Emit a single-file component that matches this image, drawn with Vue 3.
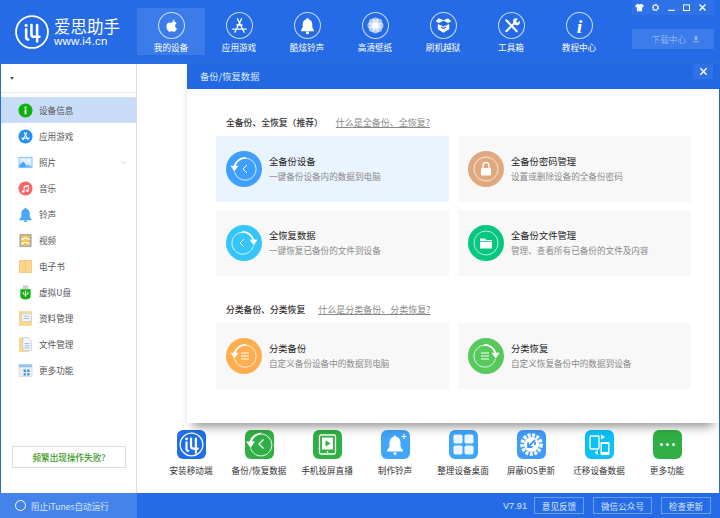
<script setup>
// 顶部导航
const navItems = [
  { label: '我的设备', active: true, icon: '<path fill="#fff" d="M15.800 7.200c-1 .2-2 1.300-1.900 2.700 1.200 0 2.100-1.300 1.900-2.700zM13.300 10.500c-.8 0-1.300-.5-2.200-.5-1.500 0-3 1.300-3 3.800 0 2.600 1.800 5.300 3.200 5.300.8 0 1.200-.5 2.100-.5s1.200.5 2.100.5c1.200 0 2.400-2 2.800-3.100-1.200-.5-1.800-1.500-1.800-2.700 0-1.100.6-2 1.400-2.500-.7-.9-1.600-1.300-2.600-1.300-1 0-1.400.5-2 .5z"/>' },
  { label: '应用游戏', icon: '<path fill="none" stroke="#fff" stroke-width="1.300" stroke-linecap="round" d="M15 6.500 8.500 19.500M11 6.500l6.500 13M6.500 16.500h13M10.500 12.500h5"/>' },
  { label: '酷炫铃声', icon: '<path fill="#fff" d="M13 5.800c-.7 0-1.100.5-1.100 1.100-2.200.5-3.500 2.400-3.500 4.800v3L6.800 17.500v1h12.400v-1l-1.600-2.800v-3c0-2.400-1.300-4.300-3.500-4.800 0-.6-.4-1.100-1.100-1.100z"/><circle cx="13" cy="20" r="1.500" fill="#fff"/>' },
  { label: '高清壁纸', icon: '<g fill="#fff" fill-opacity=".6"><circle cx="13" cy="8.500" r="3.200"/><circle cx="13" cy="17.500" r="3.200"/><circle cx="8.500" cy="13" r="3.200"/><circle cx="17.500" cy="13" r="3.200"/><circle cx="9.800" cy="9.800" r="3.200"/><circle cx="16.200" cy="9.800" r="3.200"/><circle cx="9.800" cy="16.200" r="3.200"/><circle cx="16.200" cy="16.200" r="3.200"/></g><circle cx="13" cy="13" r="3" fill="#fff"/>' },
  { label: '刷机越狱', icon: '<path fill="#fff" d="M8.500 6 13 8l4.500-2 3 3-3 1.500L13 8.500 8.500 10.500l-3-1.500zM7.500 11.500 13 14l5.500-2.500v5L13 20l-5.500-3.500z"/><path fill="none" stroke="#2f72e7" stroke-width="1.200" d="M10.500 14.500 13 16l2.500-1.500"/>' },
  { label: '工具箱', icon: '<path fill="none" stroke="#fff" stroke-width="2" stroke-linecap="round" d="M8 8l10 10.500M17 9.500 8 18.500"/><path fill="#fff" d="M15.500 6.500c1.200-.8 2.800-.7 3.800.2l-2.200 2 .5 1.200 1.300.4 1.800-1.900c.7 1.200.5 2.700-.5 3.600-1 1-2.500 1.100-3.600.4l-2-2c-.3-1.300 0-3 .9-3.900z"/>' },
  { label: '教程中心', icon: '<text x="13" y="20" text-anchor="middle" font-family="Liberation Serif, serif" font-style="italic" font-weight="700" font-size="19" fill="#fff">i</text>' },
]

// 侧边栏
const sideItems = [
  { label: '设备信息', active: true, icon: '<circle cx="8" cy="8" r="7.500" fill="#0db20d"/><rect x="7" y="6.800" width="2" height="5.200" fill="#fff"/><rect x="7" y="3.800" width="2" height="2" fill="#fff"/>' },
  { label: '应用游戏', icon: '<circle cx="8" cy="8" r="7.500" fill="#2290f2"/><path fill="none" stroke="#fff" stroke-width="1.200" d="M9.500 3.500 5 12M6.500 3.500 11 12M3.500 9.800h9"/>' },
  { label: '照片', arrow: true, icon: '<rect x=".5" y="2" width="15" height="12" fill="#7cc3fb"/><rect x="1.500" y="3" width="13" height="10" fill="#d8eefe"/><circle cx="11.500" cy="5.500" r="1.300" fill="#fff"/><path fill="#45a6f6" d="M1.500 13v-2.500L6 7l4 6z"/><path fill="#79c0fa" d="M7 13l3.500-3 4 2v1z"/>' },
  { label: '音乐', icon: '<circle cx="8" cy="8" r="7.500" fill="#fa6464"/><path fill="#fff" d="M6 5.200 11.500 4v6.300a1.500 1.300 0 1 1-1-1.200V6L7 6.800v4.500a1.500 1.300 0 1 1-1-1.200z"/>' },
  { label: '铃声', icon: '<path fill="#4aa8f8" d="M8 .8c-.7 0-1 .5-1 1-2.300.6-3.500 2.700-3.500 5v3.700L1.500 13v1h13v-1l-2-2.500V6.800c0-2.300-1.200-4.400-3.500-5 0-.5-.3-1-1-1z"/><ellipse cx="8" cy="15" rx="2" ry="1" fill="#4aa8f8"/>' },
  { label: '视频', icon: '<rect x="1.500" y="1" width="13" height="14" fill="#aaa"/><rect x="3.500" y="2.500" width="9" height="11" fill="#f5c452"/><path fill="#fff" d="M3.500 6 8 4.500 12.500 6.500v1L8 6 3.500 8zM3.500 11l4.500-2 4.500 2v1L8 10.500 3.500 12.500z"/>' },
  { label: '电子书', icon: '<rect x="1.500" y="1.500" width="6.300" height="13" fill="#fbd68a" stroke="#f3b56b" stroke-width=".6"/><rect x="8.200" y="1.500" width="6.300" height="13" fill="#fbd68a" stroke="#f3b56b" stroke-width=".6"/>' },
  { label: '虚拟U盘', icon: '<rect x="5" y=".5" width="6" height="4" fill="#ccc"/><path fill="#12b212" d="M2.500 4.500h11v7.500c0 2-1.800 3.500-5.500 3.500S2.500 14 2.500 12z"/><path fill="none" stroke="#fff" stroke-width="1" d="M8 6v6.500M5.500 7.500V9.500L8 11l2.500-1.500V7.500"/>' },
  { label: '资料管理', icon: '<rect x="1.500" y=".8" width="13" height="14.500" fill="#fbd98f" stroke="#eec36e" stroke-width=".5"/><rect x="4" y="3" width="10" height="8" fill="#f4f6fb" stroke="#b9c6de" stroke-width=".6"/><path stroke="#8ea6cf" stroke-width=".8" d="M6 5.500h6M6 8h6"/>' },
  { label: '文件管理', icon: '<rect x="1.500" y="1" width="10" height="14.500" fill="#fbd98f" stroke="#eec36e" stroke-width=".5"/><path fill="#f4f6fb" stroke="#a9b8d4" stroke-width=".6" d="M5 .8h6l3.500 3.500v10H5z"/><path stroke="#8ea6cf" stroke-width=".8" d="M7 7h5.500M7 9.300h5.500M7 11.600h5.500"/>' },
  { label: '更多功能', icon: '<rect x="1" y="1.500" width="14" height="13" fill="#e9edf3" stroke="#c4cbd6" stroke-width=".5"/><rect x="1" y="1.500" width="14" height="3" fill="#8cc4f2"/><path fill="#3f8fdd" d="M6 7h2.500v2.500H6zM9.800 7h2.500v2.500H9.800zM6 10.800h2.500v2.500H6zM9.800 10.800h2.500v2.500H9.800z"/>' },
]

// 卡片图标：同一套环形箭头，恢复类方向相反
const ringLeft = '<path fill="none" stroke="#fff" stroke-width=".8" d="M8.500 21a11 11 0 1 0 11-13.800"/><path fill="none" stroke="#fff" stroke-width="1.800" d="M20 6.800A11.500 11.500 0 0 0 8.500 15"/><path fill="#fff" d="M4.500 14.800h8L8.300 20.500z"/>'
const ringRight = '<path fill="none" stroke="#fff" stroke-width=".8" d="M27.500 21a11 11 0 1 1-11-13.800"/><path fill="none" stroke="#fff" stroke-width="1.800" d="M16 6.800A11.500 11.500 0 0 1 27.500 15"/><path fill="#fff" d="M31.500 14.800h-8l4.200 5.700z"/>'
const ring = '<circle cx="18" cy="18" r="12" fill="none" stroke="#fff" stroke-opacity=".8" stroke-width=".9"/>'
const chevron = x => `<path fill="none" stroke="#fff" stroke-width="1" d="M${x + 3} 14l-4 4 4 4"/>`
const lines = x => `<path stroke="#fff" stroke-width="1.200" d="M${x} 15h8M${x} 18h8M${x} 21h8"/>`

// i4 标志，笔画画出，顶栏和底部工具共用
const i4Mark = '<path fill="none" stroke="#fff" stroke-width="2.400" stroke-linecap="round" stroke-linejoin="round" d="M10.500 13.500v7.500q0 2 2 2M15.500 9.500V18q0 2.500 2.500 2.500h5M20.800 9.500v15.500"/><circle cx="10.500" cy="9.800" r="1.500" fill="#fff"/>'

const fullCards = [
  { title: '全备份设备', desc: '一键备份设备内的数据到电脑', color: '#3f9fff', hot: true, icon: ringLeft + chevron(18) },
  { title: '全备份密码管理', desc: '设置或删除设备的全备份密码', color: '#e0a87e', icon: ring + '<path fill="none" stroke="#fff" stroke-width="1.300" d="M15 17v-2.500a3 3 0 0 1 6 0V17"/><rect x="13" y="17" width="10" height="7.500" rx=".8" fill="#fff"/>' },
  { title: '全恢复数据', desc: '一键恢复已备份的文件到设备', color: '#34c6fb', icon: ringRight + chevron(15) },
  { title: '全备份文件管理', desc: '管理、查看所有已备份的文件及内容', color: '#06c77f', icon: ring + '<path fill="#fff" d="M12 13.500h5l1.500 1.500H24v8.500H12z"/><path fill="#06c77f" d="M12 16.200h12v.7H12z"/>' },
]
const partCards = [
  { title: '分类备份', desc: '自定义备份设备中的数据到电脑', color: '#ffae4f', icon: ringLeft + lines(15) },
  { title: '分类恢复', desc: '自定义恢复备份中的数据到设备', color: '#58c95c', icon: ringRight + lines(13) },
]

// 底部工具
const tools = [
  { label: '安装移动端', color: '#1f6ee8', icon: '<circle cx="16" cy="16" r="12.500" fill="none" stroke="#fff" stroke-width="1.400"/>' + i4Mark, box: '0 0 32 32' },
  { label: '备份/恢复数据', color: '#30b044', icon: '<g transform="translate(-3.500 -3.500)"><path fill="none" stroke="#fff" stroke-width=".9" d="M9 22a11 11 0 1 0 11-14.500"/><path fill="none" stroke="#fff" stroke-width="2.200" d="M20 7A11.500 11.500 0 0 0 9 15.500"/><path fill="#fff" d="M4.500 15h9L9 21.500z"/><path fill="none" stroke="#fff" stroke-width="1.200" d="M22 13l-4.500 4.500 4.500 4.500"/></g>' },
  { label: '手机投屏直播', color: '#30b044', icon: '<rect x="6.500" y="5" width="16" height="19" rx="1.500" fill="none" stroke="#fff" stroke-width="1.300"/><rect x="9" y="7.500" width="11" height="12" fill="#fff"/><path fill="#30b044" d="M12.500 10.500l5 3-5 3z"/><circle cx="14.500" cy="21.800" r=".9" fill="#fff"/>' },
  { label: '制作铃声', color: '#3fa6fa', icon: '<path fill="#fff" d="M14 5.500c-.8 0-1.300.6-1.300 1.300-2.800.6-4.200 3-4.200 6v3.700L6 20.500v1h16v-1l-2.500-3.800v-3.900c0-3-1.400-5.400-4.200-6 0-.7-.5-1.300-1.300-1.300z"/><circle cx="14" cy="23.500" r="1.500" fill="#fff"/><path stroke="#fff" stroke-width="1.200" d="M23 4v5M20.500 6.500h5"/>' },
  { label: '整理设备桌面', color: '#3fa6fa', icon: '<g fill="#fff" fill-opacity=".9"><rect x="4.500" y="4.500" width="9" height="9" rx="1.800"/><rect x="15.500" y="4.500" width="9" height="9" rx="1.800"/><rect x="4.500" y="15.500" width="9" height="9" rx="1.800"/><rect x="15.500" y="15.500" width="9" height="9" rx="1.800"/></g>' },
  { label: '屏蔽iOS更新', color: '#3f9bf8', icon: '<circle cx="14.500" cy="14.500" r="9.500" fill="none" stroke="#fff" stroke-width="3.500" stroke-dasharray="3 1.500"/><circle cx="14.500" cy="14.500" r="7.500" fill="#fff"/><path fill="none" stroke="#3f9bf8" stroke-width="1.800" d="M18 10l-6.500 6.500M11 12.500v4.500h4.500M18 12v3"/>' },
  { label: '迁移设备数据', color: '#0cc0f8', icon: '<rect x="5" y="6" width="9" height="13" rx="1" fill="none" stroke="#fff" stroke-width="1.300"/><rect x="15.500" y="12" width="9" height="13" rx="1" fill="#fff"/><rect x="17" y="14" width="6" height="8" fill="#0cc0f8"/><path fill="#fff" d="M16 4.500l4 2.500-4 2.500zM13 20l-3.500 2.500L13 25z"/>' },
  { label: '更多功能', color: '#30b044', icon: '<g fill="#fff"><circle cx="8.500" cy="14.500" r="1.500"/><circle cx="14.500" cy="14.500" r="1.500"/><circle cx="20.500" cy="14.500" r="1.500"/></g>' },
]

const footerButtons = ['意见反馈', '微信公众号', '检查更新']
</script>

<template>
  <div class="app">
    <header class="topbar">
      <div class="logo">
        <svg class="logo-mark" viewBox="0 0 32 32" v-html="'<circle cx=&quot;16&quot; cy=&quot;16&quot; r=&quot;15&quot; fill=&quot;none&quot; stroke=&quot;#fff&quot; stroke-width=&quot;1.700&quot;/>' + i4Mark"></svg>
        <div class="logo-text">
          <div class="logo-name">爱思助手</div>
          <div class="logo-url">www.i4.cn</div>
        </div>
      </div>

      <nav class="nav">
        <div v-for="item in navItems" :key="item.label" class="nav-item" :class="{ active: item.active }">
          <svg class="nav-icon" viewBox="0 0 26 26" v-html="'<circle cx=&quot;13&quot; cy=&quot;13&quot; r=&quot;12.500&quot; fill=&quot;none&quot; stroke=&quot;#fff&quot; stroke-opacity=&quot;.75&quot;/>' + item.icon"></svg>
          <span>{{ item.label }}</span>
        </div>
      </nav>

      <div class="top-right">
        <div class="win-controls">
          <svg viewBox="0 0 12 12"><path fill="#fff" d="M3.500 1 6 2l2.500-1L12 3.500 10 6 9.500 5.500V11h-7V5.500L2 6 0 3.500z" /></svg>
          <svg viewBox="0 0 12 12"><circle cx="6" cy="6" r="3.500" fill="none" stroke="#fff" stroke-width="2.200" stroke-dasharray="2.500 .6" /></svg>
          <svg viewBox="0 0 12 12"><rect x="1.500" y="9" width="9" height="1.500" fill="#fff" /></svg>
          <svg viewBox="0 0 12 12"><rect x="2" y="2.500" width="8" height="7.500" fill="none" stroke="#fff" stroke-width="1.300" /></svg>
          <svg viewBox="0 0 12 12"><path stroke="#fff" stroke-width="1.800" d="M2 2l8 8M10 2l-8 8" /></svg>
        </div>
        <div class="download">
          <span>下载中心</span>
          <svg viewBox="0 0 12 12"><path fill="#8fb5f2" d="M4.500 1h3v4H10L6 8.500 2 5h2.500zM1.500 9.500h9V11h-9z" /></svg>
        </div>
      </div>
    </header>

    <div class="main">
      <aside class="sidebar">
        <div class="side-top"><i class="caret"></i></div>
        <ul class="side-list">
          <li v-for="item in sideItems" :key="item.label" class="side-item" :class="{ active: item.active }">
            <svg class="side-icon" viewBox="0 0 16 16" v-html="item.icon"></svg>
            <span>{{ item.label }}</span>
            <svg v-if="item.arrow" class="side-arrow" viewBox="0 0 8 5"><path fill="none" stroke="#ccc" d="M1 1l3 3 3-3" /></svg>
          </li>
        </ul>
        <div class="side-help">频繁出现操作失败?</div>
      </aside>

      <section class="content">
        <div class="tools">
          <div v-for="tool in tools" :key="tool.label" class="tool">
            <svg class="tool-icon" :style="{ background: tool.color }" :viewBox="tool.box || '0 0 29 29'" v-html="tool.icon"></svg>
            <span>{{ tool.label }}</span>
          </div>
        </div>

        <!-- 备份/恢复弹层 -->
        <div class="modal">
          <div class="modal-title">
            <span>备份/恢复数据</span>
            <button class="modal-close">
              <svg viewBox="0 0 10 10"><path stroke="#fff" stroke-width="1.600" d="M1.500 1.500l7 7M8.500 1.500l-7 7" /></svg>
            </button>
          </div>
          <div class="modal-body">
            <div class="group-head">
              <strong>全备份、全恢复（推荐）</strong>
              <a>什么是全备份、全恢复?</a>
            </div>
            <div class="cards">
              <div v-for="card in fullCards" :key="card.title" class="card" :class="{ hot: card.hot }">
                <svg class="card-icon" viewBox="0 0 36 36" :style="{ background: card.color }" v-html="card.icon"></svg>
                <div>
                  <div class="card-title">{{ card.title }}</div>
                  <div class="card-desc">{{ card.desc }}</div>
                </div>
              </div>
            </div>
            <div class="group-head second">
              <strong>分类备份、分类恢复</strong>
              <a>什么是分类备份、分类恢复?</a>
            </div>
            <div class="cards">
              <div v-for="card in partCards" :key="card.title" class="card">
                <svg class="card-icon" viewBox="0 0 36 36" :style="{ background: card.color }" v-html="card.icon"></svg>
                <div>
                  <div class="card-title">{{ card.title }}</div>
                  <div class="card-desc">{{ card.desc }}</div>
                </div>
              </div>
            </div>
          </div>
        </div>
      </section>
    </div>

    <footer class="footer">
      <div class="itunes"><i class="ring"></i><span>阻止iTunes自动运行</span></div>
      <div class="footer-right">
        <span class="version">V7.91</span>
        <button v-for="btn in footerButtons" :key="btn">{{ btn }}</button>
      </div>
    </footer>
  </div>
</template>

<style>
html, body {
  margin: 0;
  padding: 0;
}
</style>

<style scoped>
.app {
  width: 720px;
  height: 518px;
  display: flex;
  flex-direction: column;
  overflow: hidden;
  background: #fff;
  font-family: "Noto Sans CJK SC", "Liberation Sans", sans-serif;
  font-size: 8.600px;
  color: #444;
}

/* 顶栏 */
.topbar {
  height: 64px;
  flex: none;
  display: flex;
  background: linear-gradient(#256be6 92%, #2a6fe4);
  color: #fff;
}

.logo {
  width: 137px;
  flex: none;
  display: flex;
  align-items: center;
  padding-left: 15px;
  gap: 5px;
  box-sizing: border-box;
}

.logo-mark {
  width: 34px;
  height: 34px;
  flex: none;
}

.logo-name {
  font-size: 16.500px;
  line-height: 18px;
  white-space: nowrap;
}

.logo-url {
  font-family: "Liberation Sans", sans-serif;
  font-size: 11.500px;
  line-height: 13px;
  letter-spacing: .2px;
}

.nav {
  display: flex;
  padding-top: 8px;
}

.nav-item {
  width: 68px;
  height: 47px;
  display: flex;
  flex-direction: column;
  align-items: center;
  padding-top: 4px;
  box-sizing: border-box;
  line-height: 14px;
  white-space: nowrap;
}

.nav-item.active {
  background: #3b7bea;
}

.nav-icon {
  width: 27px;
  height: 27px;
  margin-bottom: 1px;
}

.top-right {
  margin-left: 19px;
  width: 82px;
}

.win-controls {
  height: 15px;
  display: flex;
  justify-content: space-between;
  align-items: center;
  padding: 0 7px 0 3px;
  background: #2f72e7;
}

.win-controls svg {
  width: 9px;
  height: 9px;
}

.download {
  height: 20px;
  margin-top: 14px;
  display: flex;
  align-items: center;
  justify-content: flex-end;
  gap: 6px;
  padding-right: 14px;
  background: #3b7bea;
  color: #8fb5f2;
}

.download svg {
  width: 8px;
  height: 8px;
}

/* 主体 */
.main {
  flex: 1;
  min-height: 0;
  display: flex;
  border-left: 1px solid #256be6;
  border-right: 1px solid #256be6;
}

.sidebar {
  width: 136px;
  flex: none;
  display: flex;
  flex-direction: column;
  border-right: 1px solid #ddd;
  box-sizing: border-box;
}

.side-top {
  height: 29px;
  flex: none;
  display: flex;
  align-items: center;
  padding-left: 9px;
  border-bottom: 1px solid #e8e8e8;
  box-sizing: border-box;
}

.caret {
  width: 0;
  height: 0;
  border: 2.500px solid transparent;
  border-top: 3px solid #555;
  border-bottom: 0;
}

.side-list {
  margin: 4px 0 0;
  padding: 0;
  list-style: none;
}

.side-item {
  height: 26px;
  display: flex;
  align-items: center;
  padding-left: 17px;
  gap: 6px;
  color: #555;
}

.side-item.active {
  background: #c8dcf8;
}

.side-icon {
  width: 15px;
  height: 15px;
  flex: none;
}

.side-arrow {
  width: 7px;
  height: 5px;
  margin-left: auto;
  margin-right: 9px;
}

.side-help {
  margin: auto 10px 25px 11px;
  height: 20px;
  line-height: 20px;
  text-align: center;
  border: 1px solid #ddd;
  color: #3c9a1e;
  font-weight: 500;
}

.content {
  flex: 1;
  position: relative;
  display: flex;
  align-items: flex-end;
}

.tools {
  display: flex;
  padding: 0 0 16px 20px;
}

.tool {
  width: 68px;
  display: flex;
  flex-direction: column;
  align-items: center;
  line-height: 14px;
  color: #333;
  white-space: nowrap;
}

.tool-icon {
  width: 29px;
  height: 29px;
  border-radius: 6px;
  margin-bottom: 4px;
}

/* 弹层 */
.modal {
  position: absolute;
  left: 50px;
  right: 0;
  top: 0;
  height: 359px;
  background: #fff;
  box-shadow: 0 9px 10px -6px rgba(0, 0, 0, .45), 0 0 8px rgba(0, 0, 0, .03);
}

.modal-title {
  height: 25px;
  display: flex;
  justify-content: space-between;
  padding-left: 13px;
  background: #2268e2;
  color: #dbe7fb;
  font-size: 9.300px;
  line-height: 25px;
}

.modal-close {
  width: 20px;
  height: 15px;
  margin-right: 6px;
  padding: 0;
  border: none;
  background: #2f72e7;
  display: flex;
  align-items: center;
  justify-content: center;
}

.modal-close svg {
  width: 9px;
  height: 9px;
}

.modal-body {
  padding: 23px 29px 0;
}

.group-head {
  height: 20px;
  margin-bottom: 4px;
  padding-left: 10px;
  display: flex;
  align-items: center;
  gap: 13px;
}

.group-head.second {
  margin-top: 23px;
}

.group-head strong {
  font-weight: 500;
  font-size: 8.800px;
  color: #333;
}

.group-head a {
  font-size: 9px;
  color: #888;
  text-decoration: underline;
}

.cards {
  display: grid;
  grid-template-columns: 233px 233px;
  grid-auto-rows: 66px;
  gap: 8px 9px;
}

.card {
  display: flex;
  align-items: center;
  gap: 7px;
  padding-left: 10px;
  background: #f8f8f8;
}

.card.hot {
  background: #e9f4fe;
}

.card-icon {
  width: 36px;
  height: 36px;
  border-radius: 50%;
  flex: none;
}

.card-title {
  font-size: 9.300px;
  line-height: 15px;
  color: #222;
}

.card-desc {
  line-height: 15px;
  color: #8a8a8a;
}

/* 底栏 */
.footer {
  height: 25px;
  flex: none;
  display: flex;
  justify-content: space-between;
  background: #256be6;
  color: #dbe7fb;
}

.itunes {
  width: 137px;
  display: flex;
  align-items: center;
  gap: 5px;
  padding-left: 15px;
  box-sizing: border-box;
  background: #4484ea;
}

.ring {
  width: 9px;
  height: 9px;
  border: 1px solid #fff;
  border-radius: 50%;
}

.footer-right {
  display: flex;
  align-items: center;
  padding-right: 9px;
}

.version {
  font-family: "Liberation Sans", sans-serif;
  font-size: 9.200px;
  margin-right: 7px;
}

.footer-right button {
  height: 17px;
  padding: 0;
  width: 50px;
  margin-right: 9px;
  border: 1px solid #6a9cf0;
  background: transparent;
  color: #dbe7fb;
  font: inherit;
}

.footer-right button:nth-of-type(2) {
  width: 59px;
}

.footer-right button:last-child {
  margin-right: 0;
}
</style>
